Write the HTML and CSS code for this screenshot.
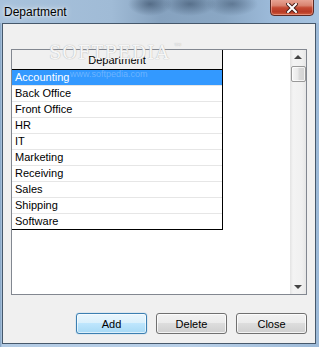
FILE: index.html
```html
<!DOCTYPE html>
<html lang="en">
<head>
  <meta charset="UTF-8" />
  <title>Department</title>
  <link rel="stylesheet" href="styles.css">
</head>
<body>
  <div class="window">
    <div class="titlebar">
      <span class="title">Department</span>
      <div class="close-btn">
        <svg width="12" height="10" viewBox="0 0 12 10">
          <path d="M2 1 L10 9 M10 1 L2 9" stroke="#4a1f1a" stroke-width="4" stroke-linecap="square"/>
          <path d="M2 1 L10 9 M10 1 L2 9" stroke="#ffffff" stroke-width="2" stroke-linecap="square"/>
        </svg>
      </div>
    </div>

    <div class="client">
      <div class="watermark">SOFTPEDIA<span class="tm">™</span></div>

      <div class="listview">
        <div class="grid">
          <div class="grid-head">Department</div>
          <div class="row selected">Accounting<span class="url-mark">www.softpedia.com</span></div>
          <div class="row">Back Office</div>
          <div class="row">Front Office</div>
          <div class="row">HR</div>
          <div class="row">IT</div>
          <div class="row">Marketing</div>
          <div class="row">Receiving</div>
          <div class="row">Sales</div>
          <div class="row">Shipping</div>
          <div class="row">Software</div>
        </div>
        <div class="vscroll">
          <div class="arrow up"></div>
          <div class="thumb"></div>
          <div class="track"></div>
          <div class="arrow down"></div>
        </div>
      </div>

      <div class="buttons">
        <button class="btn focused">Add</button>
        <button class="btn">Delete</button>
        <button class="btn">Close</button>
      </div>
    </div>
  </div>
</body>
</html>
```

FILE: styles.css
```css
* { box-sizing: border-box; margin: 0; padding: 0; }
html, body {
  width: 319px;
  height: 347px;
  overflow: hidden;
  background: #a9c4df;
  font-family: 'Liberation Sans', Arial, sans-serif;
}
.window {
  width: 319px;
  height: 347px;
  display: flex;
  flex-direction: column;
  background: linear-gradient(to right, #7f9fc0 0, #b3cbe4 2px, #b9d0e8 60%, #9dbad8 100%);
}

/* title bar (aero glass) */
.titlebar {
  height: 23px;
  position: relative;
  overflow: hidden;
  padding: 2px 0 0 4px;
  background:
    radial-gradient(ellipse 22px 12px at 150px 4px, rgba(40, 60, 85, 0.55), rgba(40, 60, 85, 0) 100%),
    radial-gradient(ellipse 26px 12px at 190px 4px, rgba(40, 60, 85, 0.5), rgba(40, 60, 85, 0) 100%),
    radial-gradient(ellipse 26px 12px at 232px 4px, rgba(40, 60, 85, 0.45), rgba(40, 60, 85, 0) 100%),
    linear-gradient(to right, #a8c2dc 0, #a0bbd6 35%, #86a2bf 50%, #8aa7c4 70%, #9cbad9 85%, #a6c3e0 100%);
}
.title {
  position: relative;
  font-size: 12px;
  line-height: 15px;
  color: #000;
  text-shadow: 0 0 6px rgba(255, 255, 255, 0.9), 0 0 3px rgba(255, 255, 255, 0.8);
}
.close-btn {
  position: absolute;
  left: 270px;
  top: -2px;
  width: 44px;
  height: 18px;
  border: 1px solid #5b2a24;
  border-radius: 0 0 4px 4px;
  background: linear-gradient(#e9a899 0%, #d98471 40%, #c44a33 55%, #b83a25 80%, #d0603f 100%);
  box-shadow: inset 0 0 0 1px rgba(255, 200, 190, 0.45);
  display: flex;
  justify-content: center;
  align-items: center;
  padding-top: 2px;
}

/* client area */
.client {
  flex: 1;
  margin: 0 3px 3px 2px;
  border: 1px solid #46586b;
  background: #f0f0f0;
  padding: 25px 8px 9px;
  position: relative;
  display: flex;
  flex-direction: column;
}
.watermark {
  position: absolute;
  left: 46px;
  top: 13px;
  font-family: 'DejaVu Serif', serif;
  font-size: 18px;
  line-height: 20px;
  letter-spacing: 1px;
  color: #f6f6f6;
  text-shadow: 0 0 1px #bdbdbd, 0 0 1px #bdbdbd;
  z-index: 2;
}
.watermark .tm {
  font-size: 9px;
  vertical-align: 9px;
  margin-left: 4px;
}

.listview {
  height: 246px;
  border: 1px solid #828790;
  background: #fff;
  display: flex;
}
.grid {
  width: 211px;
  align-self: flex-start;
  border-right: 1px solid #000;
  font-size: 11px;
}
.grid-head {
  height: 20px;
  padding-top: 2px;
  line-height: 17px;
  text-align: center;
  background: #f0f0f0;
  border-bottom: 1px solid #000;
}
.row {
  height: 16px;
  line-height: 15px;
  padding-left: 3px;
  border-bottom: 1px solid #e6e6e6;
  color: #000;
  position: relative;
}
.row:last-child { border-bottom-color: #000; }
.row.selected {
  background: linear-gradient(#3399ff, #3399ff) top / 100% 15px no-repeat;
  color: #fff;
}
.url-mark {
  position: absolute;
  left: 58px;
  top: -3px;
  font-size: 9px;
  color: rgba(255, 255, 255, 0.28);
}

/* scrollbar */
.vscroll {
  width: 16px;
  margin-left: auto;
  display: flex;
  flex-direction: column;
  background: linear-gradient(to right, #e3e3e3 0, #f3f3f3 3px, #f0f0f0 12px, #e6e6e6 100%);
}
.arrow {
  height: 16px;
  display: flex;
  justify-content: center;
  align-items: center;
}
.arrow::before {
  content: '';
  border-left: 4px solid transparent;
  border-right: 4px solid transparent;
}
.arrow.up::before { border-bottom: 4px solid #444; margin-top: -2px; }
.arrow.down::before { border-top: 4px solid #444; margin-top: 2px; }
.thumb {
  height: 16px;
  margin: 0 0 0 1px;
  border: 1px solid #999;
  border-radius: 2px;
  background: linear-gradient(to right, #f6f6f6, #e9e9e9 45%, #dadada 55%, #d2d2d2);
  box-shadow: inset 0 0 0 1px rgba(255, 255, 255, 0.7);
}
.track { flex: 1; }

/* buttons */
.buttons {
  margin-top: 18px;
  display: flex;
  justify-content: flex-end;
  gap: 9px;
}
.btn {
  width: 71px;
  height: 21px;
  font-family: 'Liberation Sans', Arial, sans-serif;
  font-size: 11px;
  color: #000;
  border: 1px solid #707070;
  border-radius: 3px;
  background: linear-gradient(#f2f2f2 0%, #ebebeb 50%, #dddddd 50%, #cfcfcf 100%);
  box-shadow: inset 0 0 0 1px rgba(255, 255, 255, 0.75);
}
.btn.focused {
  border-color: #3c7fb1;
  background: linear-gradient(#eaf6fd 0%, #d9f0fc 50%, #bee6fd 50%, #a7d9f5 100%);
  box-shadow: inset 0 0 0 1px rgba(255, 255, 255, 0.6), 0 0 1px #48a0e0;
}
```
